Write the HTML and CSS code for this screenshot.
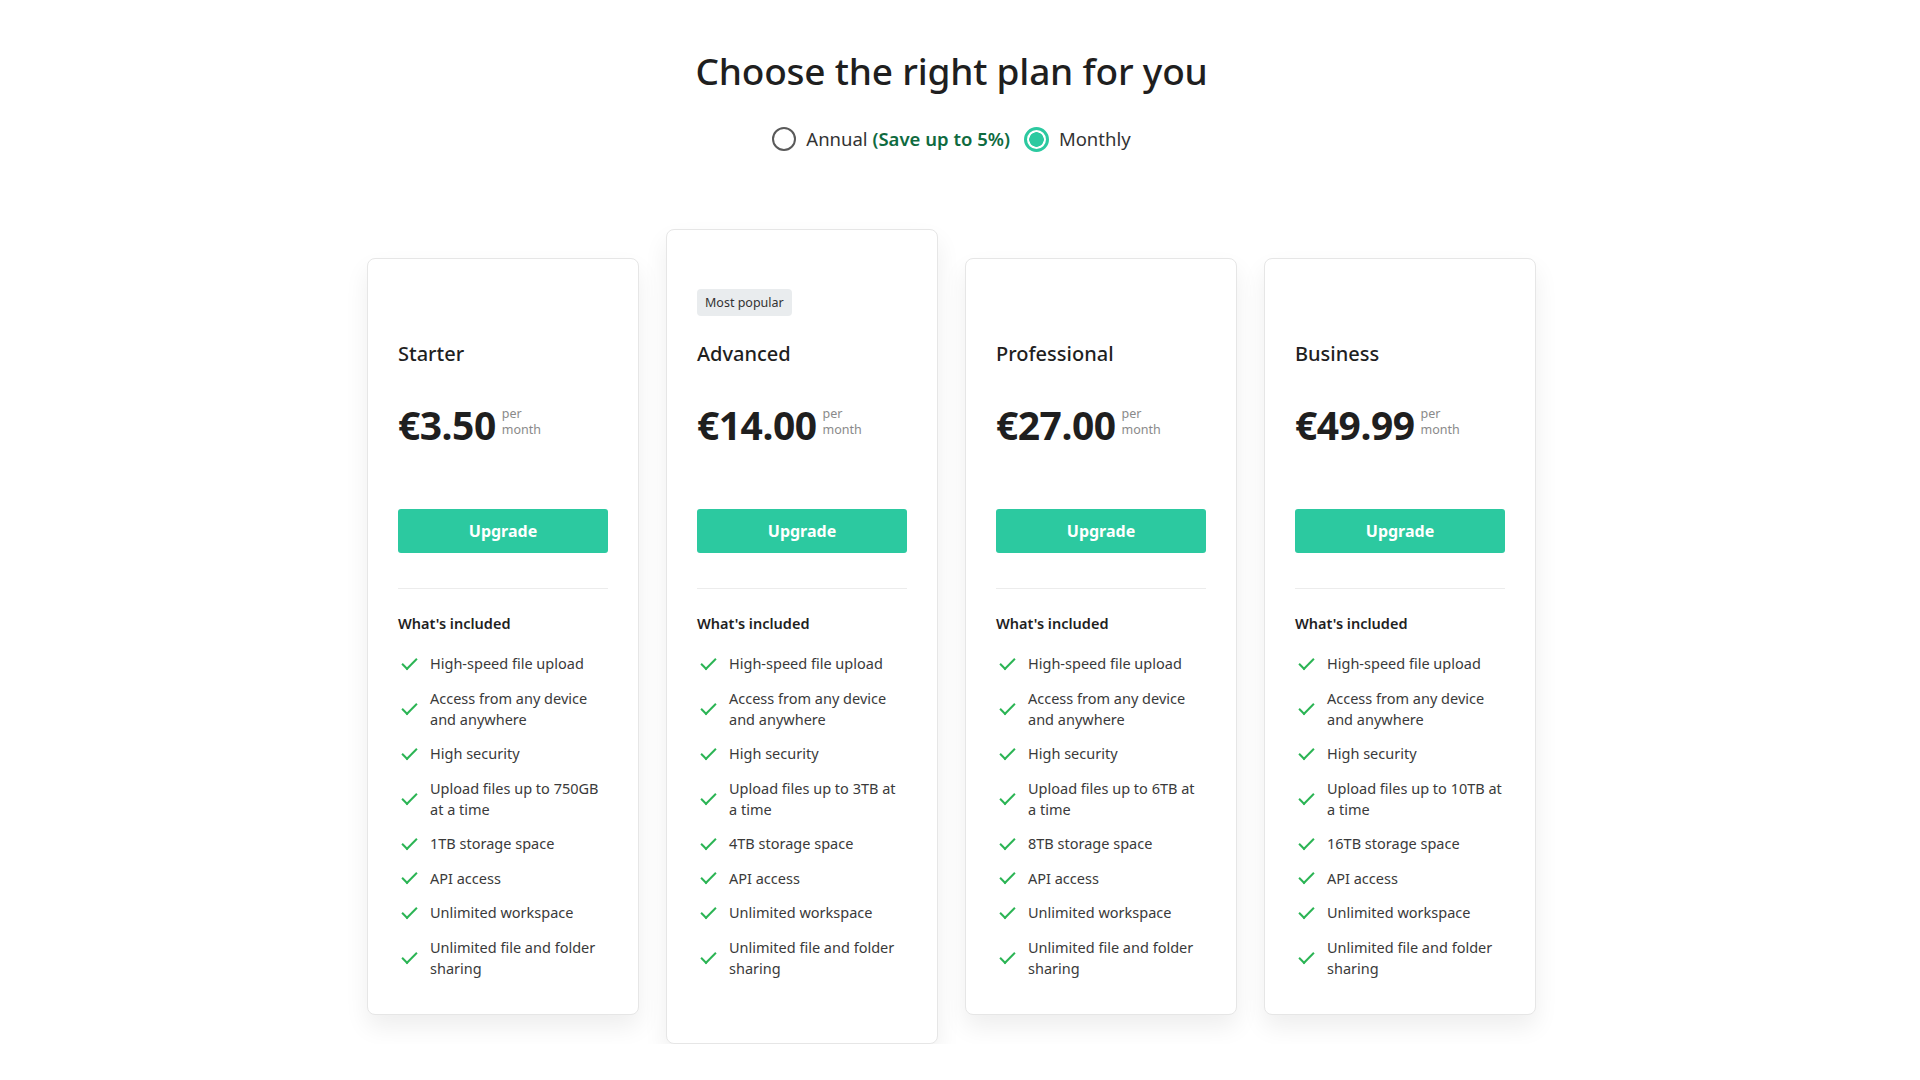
FILE: index.html
```html
<!DOCTYPE html>
<html lang="en">

<head>
    <meta charset="UTF-8">
    <meta name="viewport" content="width=device-width, initial-scale=1.0">
    <title>Pricing</title>
    <link rel="stylesheet" href="styles.css">
</head>

<body>
    <main class="pricing">
        <h1 class="pricing-title">Choose the right plan for you</h1>

        <!-- billing switch -->
        <div class="billing">
            <label class="billing-option">
                <span class="radio"></span>
                <span>Annual <strong class="save">(Save up to 5%)</strong></span>
            </label>
            <label class="billing-option">
                <span class="radio radio-checked"></span>
                <span>Monthly</span>
            </label>
        </div>

        <!-- plans -->
        <div class="plans">
            <div class="plan">
                <div class="badge-slot"></div>
                <h2 class="plan-name">Starter</h2>
                <div class="plan-price">
                    <span class="amount">€3.50</span>
                    <span class="period">per<br>month</span>
                </div>
                <button class="upgrade">Upgrade</button>
                <hr class="divider">
                <h3 class="included">What's included</h3>
                <ul class="features">
                    <li>High-speed file upload</li>
                    <li>Access from any device and anywhere</li>
                    <li>High security</li>
                    <li>Upload files up to 750GB at a time</li>
                    <li>1TB storage space</li>
                    <li>API access</li>
                    <li>Unlimited workspace</li>
                    <li>Unlimited file and folder sharing</li>
                </ul>
            </div>

            <div class="plan plan-popular">
                <div class="badge-slot"><span class="badge">Most popular</span></div>
                <h2 class="plan-name">Advanced</h2>
                <div class="plan-price">
                    <span class="amount">€14.00</span>
                    <span class="period">per<br>month</span>
                </div>
                <button class="upgrade">Upgrade</button>
                <hr class="divider">
                <h3 class="included">What's included</h3>
                <ul class="features">
                    <li>High-speed file upload</li>
                    <li>Access from any device and anywhere</li>
                    <li>High security</li>
                    <li>Upload files up to 3TB at a time</li>
                    <li>4TB storage space</li>
                    <li>API access</li>
                    <li>Unlimited workspace</li>
                    <li>Unlimited file and folder sharing</li>
                </ul>
            </div>

            <div class="plan">
                <div class="badge-slot"></div>
                <h2 class="plan-name">Professional</h2>
                <div class="plan-price">
                    <span class="amount">€27.00</span>
                    <span class="period">per<br>month</span>
                </div>
                <button class="upgrade">Upgrade</button>
                <hr class="divider">
                <h3 class="included">What's included</h3>
                <ul class="features">
                    <li>High-speed file upload</li>
                    <li>Access from any device and anywhere</li>
                    <li>High security</li>
                    <li>Upload files up to 6TB at a time</li>
                    <li>8TB storage space</li>
                    <li>API access</li>
                    <li>Unlimited workspace</li>
                    <li>Unlimited file and folder sharing</li>
                </ul>
            </div>

            <div class="plan">
                <div class="badge-slot"></div>
                <h2 class="plan-name">Business</h2>
                <div class="plan-price">
                    <span class="amount">€49.99</span>
                    <span class="period">per<br>month</span>
                </div>
                <button class="upgrade">Upgrade</button>
                <hr class="divider">
                <h3 class="included">What's included</h3>
                <ul class="features">
                    <li>High-speed file upload</li>
                    <li>Access from any device and anywhere</li>
                    <li>High security</li>
                    <li>Upload files up to 10TB at a time</li>
                    <li>16TB storage space</li>
                    <li>API access</li>
                    <li>Unlimited workspace</li>
                    <li>Unlimited file and folder sharing</li>
                </ul>
            </div>
        </div>
    </main>
</body>

</html>
```

FILE: styles.css
```css
/* page */
body {
    margin: 0;
    padding: 0 17px 0 0;
    font-family: "Noto Sans", "Open Sans", sans-serif;
    color: #1f1f1f;
    background-color: #fff;
}

.pricing {
    display: flex;
    flex-direction: column;
    align-items: center;
    padding-top: 46px;
}

.pricing-title {
    margin: 0;
    font-size: 37px;
    font-weight: 500;
    line-height: 50px;
    letter-spacing: -0.2px;
}

/* billing switch */
.billing {
    display: flex;
    gap: 14px;
    margin-top: 29px;
    font-size: 18.5px;
    line-height: 28px;
    color: #333;
}

.billing-option {
    display: flex;
    align-items: center;
    gap: 10px;
}

.save {
    color: #0f6b3f;
    font-weight: 600;
}

.radio {
    width: 20px;
    height: 20px;
    border: 2px solid #5a5a5a;
    border-radius: 50%;
    box-sizing: content-box;
}

.radio-checked {
    border: 3px solid #2cc9a0;
    width: 19px;
    height: 19px;
    background: radial-gradient(circle, #2cc9a0 0 7px, #fff 7.5px);
}

/* plans */
.plans {
    display: flex;
    align-items: center;
    gap: 27px;
    margin-top: 76px;
}

.plan {
    width: 272px;
    box-sizing: border-box;
    padding: 30px 30px 35px;
    background: #fff;
    border: 1px solid #e6e6e6;
    border-radius: 8px;
    box-shadow: 0 12px 24px rgba(0, 0, 0, 0.07);
}

.plan-popular {
    padding-top: 59px;
    padding-bottom: 64px;
}

.badge-slot {
    height: 27px;
}

.badge {
    display: inline-block;
    padding: 0 8px;
    line-height: 27px;
    font-size: 12.5px;
    color: #333;
    background-color: #e9ecee;
    border-radius: 4px;
}

.plan-name {
    margin: 24px 0 0;
    font-size: 20px;
    font-weight: 500;
    line-height: 28px;
}

.plan-price {
    display: flex;
    align-items: center;
    gap: 6px;
    margin-top: 32px;
    height: 48px;
}

.amount {
    font-size: 39px;
    font-weight: 700;
    letter-spacing: -0.5px;
}

.period {
    font-size: 12.5px;
    line-height: 16px;
    color: #8a8a8a;
    margin-top: -4px;
}

.upgrade {
    display: block;
    width: 100%;
    height: 44px;
    margin-top: 61px;
    font-family: inherit;
    font-size: 16px;
    font-weight: 700;
    color: #fff;
    background-color: #2cc9a0;
    border: none;
    border-radius: 3px;
    cursor: pointer;
}

.divider {
    margin: 35px 0 0;
    border: none;
    border-top: 1px solid #ececec;
}

.included {
    margin: 24px 0 0;
    font-size: 14.5px;
    font-weight: 600;
    line-height: 21px;
}

/* features */
.features {
    list-style: none;
    margin: 19px 0 0;
    padding: 0;
    display: flex;
    flex-direction: column;
    gap: 13.5px;
}

.features li {
    position: relative;
    padding-left: 32px;
    font-size: 14.5px;
    line-height: 21px;
    color: #3a3a3a;
}

.features li::before {
    content: "";
    position: absolute;
    left: 4px;
    top: 50%;
    width: 13px;
    height: 6px;
    margin-top: -6px;
    border-left: 2px solid #2bb454;
    border-bottom: 2px solid #2bb454;
    transform: rotate(-45deg);
}
```
